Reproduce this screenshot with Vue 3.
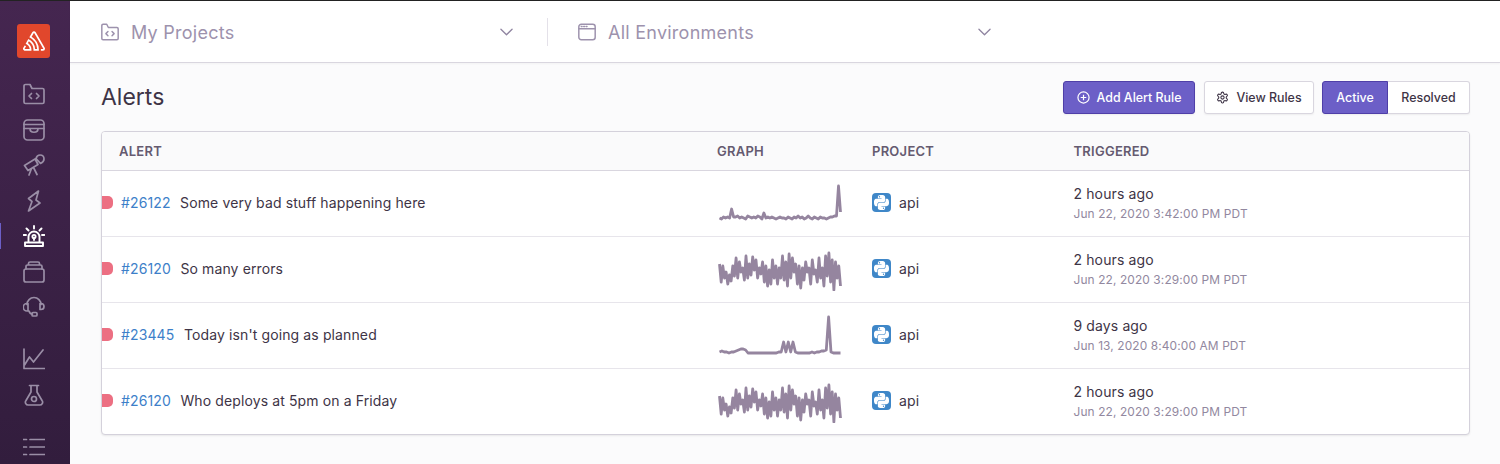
<template>
  <div class="app">
    <aside class="sidebar">
      <div class="logo">
        <svg viewBox="0 0 50 44" fill="#fff"><path d="M29,2.26a4.67,4.67,0,0,0-8,0L14.42,13.53A32.21,32.21,0,0,1,32.17,40.19H27.55A27.68,27.68,0,0,0,12.09,17.47L6,28a15.92,15.92,0,0,1,9.23,12.17H4.62A.76.76,0,0,1,4,39.06l2.94-5a10.74,10.74,0,0,0-3.36-1.9l-2.91,5a4.54,4.54,0,0,0,1.69,6.24A4.66,4.66,0,0,0,4.62,44H19.15a19.4,19.4,0,0,0-8-17.31l2.31-4A23.87,23.87,0,0,1,23.76,44H36.07a35.88,35.88,0,0,0-16.41-31.8l4.67-8a.77.77,0,0,1,1.05-.27c.53.29,20.29,34.77,20.66,35.17a.76.76,0,0,1-.68,1.13H40.6q.09,1.91,0,3.81h4.78A4.59,4.59,0,0,0,50,39.43a4.49,4.49,0,0,0-.62-2.28Z" /></svg>
      </div>
      <nav class="nav">
        <div class="nav-group">
          <span class="nav-item">
            <svg viewBox="0 0 22 22"><path d="M1 4.500V19a1.500 1.500 0 0 0 1.500 1.500h17A1.500 1.500 0 0 0 21 19V7a1.500 1.500 0 0 0-1.500-1.500H9L7 1.500H2.500A1.500 1.500 0 0 0 1 3z" /><path d="M8.500 10.500L6 13l2.500 2.500M13.500 10.500L16 13l-2.500 2.500" /></svg>
          </span>
          <span class="nav-item">
            <svg viewBox="0 0 22 22"><rect x="1" y="1" width="20" height="20" rx="3.500" /><path d="M1 5.500h20M1 9.500h20M7 9.500c0 5 8 5 8 0" /></svg>
          </span>
          <span class="nav-item">
            <svg viewBox="0 0 22 22"><path d="M1.500 11.500L12 5l3 5.500L5 16.500zM13 4.500Q14 1 17 1q4 0 4 4 0 3-3.500 4.500zM8.500 14.500L6 21M10.500 13.500l3.500 7" /></svg>
          </span>
          <span class="nav-item">
            <svg viewBox="0 0 22 22"><path d="M15.500 1L5.500 8.500 9 11.500 5.500 21 17 13l-4-3z" /></svg>
          </span>
          <span class="nav-item active">
            <svg viewBox="0 0 22 22"><path d="M5.500 17V12a5.500 5.500 0 0 1 11 0v5M2 17.500h18v3.500H2zM11 1v2.500M3.500 3.500l2 2M18.500 3.500l-2 2M.5 10H3M19 10h2.500" /><circle cx="11" cy="11.500" r="1.600" /><path d="M11 13v2" /></svg>
          </span>
          <span class="nav-item">
            <svg viewBox="0 0 22 22"><rect x="1" y="8" width="20" height="13" rx="2" /><path d="M3 8V5.500A1.500 1.500 0 0 1 4.500 4h13A1.500 1.500 0 0 1 19 5.500V8M5.500 4V2.500A1.500 1.500 0 0 1 7 1h8a1.500 1.500 0 0 1 1.500 1.500V4" /></svg>
          </span>
          <span class="nav-item">
            <svg viewBox="0 0 22 22"><path d="M4 8.500a7 7 0 0 1 14 0M4 7.500a3 3 0 0 0 0 7.500h1V7.500zM18 7.500a3 3 0 0 1 0 6h-1v-6zM6 15c.5 2 2 3 3.500 3" /><rect x="9" y="16.500" width="5" height="3.500" rx="1" /></svg>
          </span>
        </div>
        <div class="nav-group">
          <span class="nav-item">
            <svg viewBox="0 0 22 22"><path d="M1 1v19.500h20.500M1.500 17l5-8 4 5L20 2" /></svg>
          </span>
          <span class="nav-item">
            <svg viewBox="0 0 22 22"><path d="M6.500 1.500h9M8 1.500v6.500L3 16.500A2.800 2.800 0 0 0 5.500 21h11a2.800 2.800 0 0 0 2.500-4.500L14 8V1.500" /><circle cx="11" cy="15" r="2.500" /></svg>
          </span>
        </div>
        <div class="nav-group">
          <span class="nav-item">
            <svg viewBox="0 0 22 22"><path d="M.5 3.500h3M7 3.500h14.500M.5 11h3M7 11h14.500M.5 18.500h3M7 18.500h14.500" /></svg>
          </span>
        </div>
      </nav>
    </aside>

    <div class="content">
      <header class="topbar">
        <div class="selector projects">
          <svg class="sel-icon" viewBox="0 0 22 22"><path d="M1 4.500V19a1.500 1.500 0 0 0 1.500 1.500h17A1.500 1.500 0 0 0 21 19V7a1.500 1.500 0 0 0-1.500-1.500H9L7 1.500H2.500A1.500 1.500 0 0 0 1 3z" /><path d="M8.500 10.500L6 13l2.500 2.500M13.500 10.500L16 13l-2.500 2.500" /></svg>
          <span class="sel-label">My Projects</span>
          <svg class="chevron" viewBox="0 0 14 8"><path d="M1 1l6 6 6-6" /></svg>
        </div>
        <div class="divider"></div>
        <div class="selector envs">
          <svg class="sel-icon" viewBox="0 0 22 22"><rect x="1" y="1.500" width="20" height="19" rx="3" /><path d="M1 7h20M4 4.300h1M7 4.300h1M10 4.300h1" /></svg>
          <span class="sel-label">All Environments</span>
          <svg class="chevron" viewBox="0 0 14 8"><path d="M1 1l6 6 6-6" /></svg>
        </div>
      </header>

      <main class="main">
        <div class="toolbar">
          <h1 class="title">Alerts</h1>
          <div class="actions">
            <button class="btn primary add">
              <svg viewBox="0 0 14 14"><circle cx="7" cy="7" r="6" /><path d="M7 4v6M4 7h6" /></svg>
              Add Alert Rule
            </button>
            <button class="btn view">
              <svg viewBox="0 0 24 24"><circle cx="12" cy="12" r="3" /><path d="M12.220 2h-.44a2 2 0 0 0-2 2v.18a2 2 0 0 1-1 1.730l-.43.25a2 2 0 0 1-2 0l-.15-.08a2 2 0 0 0-2.730.730l-.22.38a2 2 0 0 0 .73 2.730l.15.1a2 2 0 0 1 1 1.720v.51a2 2 0 0 1-1 1.740l-.15.09a2 2 0 0 0-.73 2.730l.22.38a2 2 0 0 0 2.730.730l.15-.08a2 2 0 0 1 2 0l.43.25a2 2 0 0 1 1 1.730V20a2 2 0 0 0 2 2h.44a2 2 0 0 0 2-2v-.18a2 2 0 0 1 1-1.730l.43-.25a2 2 0 0 1 2 0l.15.08a2 2 0 0 0 2.730-.730l.22-.39a2 2 0 0 0-.73-2.730l-.15-.08a2 2 0 0 1-1-1.740v-.5a2 2 0 0 1 1-1.740l.15-.09a2 2 0 0 0 .73-2.730l-.22-.38a2 2 0 0 0-2.730-.730l-.15.08a2 2 0 0 1-2 0l-.43-.25a2 2 0 0 1-1-1.730V4a2 2 0 0 0-2-2z" /></svg>
              View Rules
            </button>
            <div class="segment">
              <button class="btn primary seg-active">Active</button>
              <button class="btn seg-other">Resolved</button>
            </div>
          </div>
        </div>

        <section class="table">
          <div class="row head">
            <div class="cell-alert">Alert</div>
            <div>Graph</div>
            <div>Project</div>
            <div>Triggered</div>
          </div>
          <div v-for="(alert, i) in alerts" :key="i" class="row item">
            <div class="cell-alert">
              <span class="dot"></span>
              <a class="alert-id">#{{ alert.id }}</a>
              <span class="alert-title">{{ alert.title }}</span>
            </div>
            <div class="graph">
              <svg viewBox="0 0 124 44" width="124" height="44"><path :d="linePath(alert.graph)" /></svg>
            </div>
            <div class="project">
              <span class="py-badge">
                <svg viewBox="-14 -14 138 138">
                  <path d="M54.900 0C27 0 28.700 12.100 28.700 12.100l0 12.500h26.600v3.800H18.100S.3 26.400.3 54.500s15.500 27.100 15.500 27.100h9.300V68.500s-.5-15.500 15.300-15.500h26.300s14.800.2 14.800-14.300V14.700S83.500 0 54.900 0zM40.300 8.400a4.800 4.800 0 1 1 0 9.600 4.800 4.800 0 0 1 0-9.600z" fill-rule="evenodd" />
                  <path d="M54.900 0C27 0 28.700 12.100 28.700 12.100l0 12.500h26.600v3.800H18.100S.3 26.400.3 54.500s15.500 27.100 15.500 27.100h9.300V68.500s-.5-15.500 15.300-15.500h26.300s14.800.2 14.800-14.300V14.700S83.500 0 54.900 0zM40.300 8.400a4.800 4.800 0 1 1 0 9.600 4.800 4.800 0 0 1 0-9.600z" fill-rule="evenodd" transform="rotate(180 55 55)" />
                </svg>
              </span>
              <span>api</span>
            </div>
            <div class="triggered">
              <div class="ago">{{ alert.ago }}</div>
              <div class="date">{{ alert.date }}</div>
            </div>
          </div>
        </section>
      </main>
    </div>
  </div>
</template>

<script setup>
const noisy = [16,34,18,30,24,36,27,33,18,28,10,30,14,24,20,32,8,30,16,27,9,22,12,30,20,26,14,34,18,38,22,36,12,30,18,36,20,30,8,32,14,38,6,30,10,24,16,36,18,40,20,32,14,24,20,36,12,26,22,34,10,30,20,38,8,28,5,34,12,42,14,30,18,38]

const spikeA = [36,37,35,36,35,36,27,35,35,34,36,35,36,37,34,35,36,35,36,34,35,37,31,36,35,36,35,36,37,36,35,36,36,37,35,36,37,35,36,34,36,35,37,36,34,36,37,35,36,37,35,36,36,37,36,35,35,34,34,4,30]
const spikeB = [38,37,38,38,39,38,38,37,36,35,35,36,39,39,39,39,39,39,39,39,39,39,39,39,39,38,38,28,38,28,38,28,38,39,39,39,39,39,39,38,39,38,38,37,37,36,3,38,39,39,39,39]

const alerts = [
  { id: 26122, title: 'Some very bad stuff happening here', ago: '2 hours ago', date: 'Jun 22, 2020 3:42:00 PM PDT', graph: spikeA },
  { id: 26120, title: 'So many errors', ago: '2 hours ago', date: 'Jun 22, 2020 3:29:00 PM PDT', graph: noisy },
  { id: 23445, title: "Today isn't going as planned", ago: '9 days ago', date: 'Jun 13, 2020 8:40:00 AM PDT', graph: spikeB },
  { id: 26120, title: 'Who deploys at 5pm on a Friday', ago: '2 hours ago', date: 'Jun 22, 2020 3:29:00 PM PDT', graph: noisy },
]

function linePath(points) {
  const step = 121 / (points.length - 1)
  return points.map((y, i) => (i ? 'L' : 'M') + (1.5 + i * step).toFixed(1) + ' ' + (y + 1)).join(' ')
}
</script>

<style>
html, body { margin: 0; padding: 0; background: #fbfbfc; }
</style>

<style scoped>
.app {
  display: flex;
  width: 1500px;
  height: 464px;
  overflow: hidden;
  box-sizing: border-box;
  border-top: 1px solid #222;
  font-family: Inter, "Noto Sans", sans-serif;
  color: #3e3446;
  background: #fbfbfc;
}
.sidebar {
  width: 70px;
  flex-shrink: 0;
  display: flex;
  flex-direction: column;
  align-items: center;
  background: linear-gradient(180deg, #452650 0%, #321d3d 100%);
}
.logo {
  width: 33px;
  height: 34px;
  margin-top: 23px;
  margin-right: 3px;
  border-radius: 3px;
  background: #e1472c;
  display: flex;
  align-items: center;
  justify-content: center;
}
.logo svg { width: 22px; height: 20px; }
.nav {
  display: flex;
  flex-direction: column;
  margin-top: 25px;
  gap: 30px;
}
.nav-group {
  display: flex;
  flex-direction: column;
  gap: 13.500px;
}
.nav-item {
  position: relative;
  display: flex;
  width: 22px;
  height: 22px;
  margin-left: -3px;
}
.nav-item svg {
  width: 22px;
  height: 22px;
  fill: none;
  stroke: #9a8ea6;
  stroke-width: 1.700;
  stroke-linecap: round;
  stroke-linejoin: round;
}
.nav-item.active svg { stroke: #fff; stroke-width: 1.900; }
.nav-item.active::before {
  content: '';
  position: absolute;
  left: -24px;
  top: -2px;
  width: 2px;
  height: 26px;
  background: #6c5fc7;
}

.content {
  flex: 1;
  min-width: 0;
  display: flex;
  flex-direction: column;
}
.topbar {
  height: 62px;
  flex-shrink: 0;
  box-sizing: border-box;
  display: flex;
  align-items: center;
  padding: 1px 0 0 31px;
  background: #fff;
  border-bottom: 1px solid #d9d6df;
  box-shadow: 0 1px 2px rgba(0, 0, 0, .04);
}
.selector {
  display: flex;
  align-items: center;
  color: #9d92ad;
}
.projects { width: 412px; }
.envs { width: 413px; }
.divider {
  width: 1px;
  height: 28px;
  margin: 0 30px 0 34px;
  background: #e4e1e9;
}
.sel-icon {
  width: 18px;
  height: 18px;
  margin-right: 12px;
  fill: none;
  stroke: #9d92ad;
  stroke-width: 1.800;
  stroke-linecap: round;
  stroke-linejoin: round;
}
.sel-label { flex: 1; font-size: 18px; letter-spacing: .25px; }
.chevron {
  width: 13px;
  height: 8px;
  fill: none;
  stroke: #8f84a0;
  stroke-width: 1.400;
  stroke-linecap: round;
  stroke-linejoin: round;
}

.main {
  flex: 1;
  padding: 18px 30px 0 31px;
}
.toolbar {
  display: flex;
  align-items: center;
  justify-content: space-between;
  height: 33px;
  margin-bottom: 17px;
}
.title {
  margin: -1px 0 0;
  font-size: 23px;
  font-weight: 400;
  color: #3e3446;
}
.actions {
  display: flex;
  gap: 8px;
}
.btn {
  display: flex;
  align-items: center;
  justify-content: center;
  gap: 7px;
  height: 33px;
  padding: 0;
  box-sizing: border-box;
  border: 1px solid #d9d6df;
  border-radius: 3px;
  background: #fff;
  color: #3e3446;
  font-family: inherit;
  font-size: 12.400px;
  font-weight: 500;
  box-shadow: 0 1px 2px rgba(0, 0, 0, .06);
}
.btn svg {
  width: 13px;
  height: 13px;
  fill: none;
  stroke: currentColor;
  stroke-width: 1.300;
}
.btn.view svg { stroke-width: 2; }
.btn.primary {
  background: #6c5fc7;
  border-color: #4f3fa8;
  color: #fff;
}
.add { width: 132px; margin-right: 1px; }
.view { width: 110px; }
.segment {
  display: flex;
}
.seg-active {
  width: 66px;
  border-radius: 3px 0 0 3px;
}
.seg-other {
  width: 82px;
  border-left: 0;
  border-radius: 0 3px 3px 0;
}

.table {
  box-sizing: border-box;
  border: 1px solid #d4d1db;
  border-radius: 4px;
  background: #fff;
  box-shadow: 0 1px 2px rgba(0, 0, 0, .08);
  overflow: hidden;
}
.row {
  display: grid;
  grid-template-columns: 615px 155px 201.500px 1fr;
  align-items: center;
  box-sizing: border-box;
}
.head {
  height: 39px;
  background: #fafafb;
  border-bottom: 1px solid #d9d6df;
  font-size: 13px;
  letter-spacing: .25px;
  font-weight: 600;
  text-transform: uppercase;
  color: #655a70;
}
.head .cell-alert { padding-left: 17px; }
.item {
  height: 66px;
  font-size: 14px;
  letter-spacing: .12px;
  border-bottom: 1px solid #e7e5eb;
}
.item:last-child { height: 65px; border-bottom: 0; }
.cell-alert {
  display: flex;
  align-items: center;
  padding-bottom: 2px;
}
.head .cell-alert { padding-bottom: 0; }
.dot {
  width: 11px;
  height: 13px;
  margin-right: 8px;
  border-radius: 0 5px 5px 0;
  background: #ec6f82;
}
.alert-id {
  color: #3d7fc9;
  margin-right: 9.500px;
}
.alert-title { color: #3e3446; }
.graph {
  display: flex;
  margin: -1px 0 0 1px;
}
.graph svg {
  fill: none;
  stroke: #95859f;
  stroke-width: 2.800;
  stroke-linejoin: round;
}
.project {
  display: flex;
  align-items: center;
  gap: 8px;
  font-size: 14px;
  padding-bottom: 2px;
}
.py-badge {
  display: flex;
  width: 19px;
  height: 19px;
  border-radius: 4px;
  background: #3f87c8;
}
.py-badge svg { width: 19px; height: 19px; fill: #fff; }
.ago { font-size: 14px; line-height: 20px; }
.date { font-size: 11.900px; line-height: 18px; color: #9288a0; margin-top: 1px; }
</style>
